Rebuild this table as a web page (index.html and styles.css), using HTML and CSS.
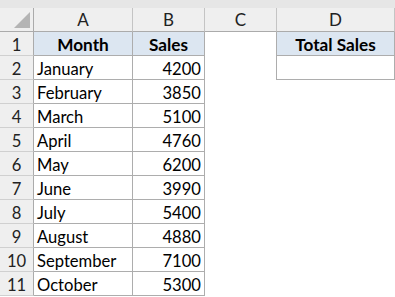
FILE: index.html
```html
<!DOCTYPE html>
<html>
<head>
<meta charset="utf-8">
<link rel="stylesheet" href="styles.css">
</head>
<body>
<div class="topband"></div>
<div class="sheet">
  <div class="corner"><span class="tri"></span></div>
  <div class="ch">A</div>
  <div class="ch">B</div>
  <div class="ch">C</div>
  <div class="ch">D</div>

  <div class="rh">1</div>
  <div class="cell th">Month</div>
  <div class="cell th">Sales</div>
  <div class="cell blank edge"></div>
  <div class="cell th dcell">Total Sales</div>

  <div class="rh">2</div>
  <div class="cell">January</div>
  <div class="cell num">4200</div>
  <div class="cell blank edge"></div>
  <div class="cell dcell"></div>

  <div class="rh">3</div>
  <div class="cell">February</div>
  <div class="cell num">3850</div>
  <div class="cell blank"></div>
  <div class="cell blank"></div>

  <div class="rh">4</div>
  <div class="cell">March</div>
  <div class="cell num">5100</div>
  <div class="cell blank"></div>
  <div class="cell blank"></div>

  <div class="rh">5</div>
  <div class="cell">April</div>
  <div class="cell num">4760</div>
  <div class="cell blank"></div>
  <div class="cell blank"></div>

  <div class="rh">6</div>
  <div class="cell">May</div>
  <div class="cell num">6200</div>
  <div class="cell blank"></div>
  <div class="cell blank"></div>

  <div class="rh">7</div>
  <div class="cell">June</div>
  <div class="cell num">3990</div>
  <div class="cell blank"></div>
  <div class="cell blank"></div>

  <div class="rh">8</div>
  <div class="cell">July</div>
  <div class="cell num">5400</div>
  <div class="cell blank"></div>
  <div class="cell blank"></div>

  <div class="rh">9</div>
  <div class="cell">August</div>
  <div class="cell num">4880</div>
  <div class="cell blank"></div>
  <div class="cell blank"></div>

  <div class="rh">10</div>
  <div class="cell">September</div>
  <div class="cell num">7100</div>
  <div class="cell blank"></div>
  <div class="cell blank"></div>

  <div class="rh">11</div>
  <div class="cell">October</div>
  <div class="cell num">5300</div>
  <div class="cell blank"></div>
  <div class="cell blank"></div>
</div>
</body>
</html>
```

FILE: styles.css
```css
html, body {
  margin: 0;
  padding: 0;
  background: #ffffff;
  width: 395px;
  height: 297px;
  overflow: hidden;
  font-family: Lato, "Open Sans", sans-serif;
  font-size: 16.6px;
  color: #000;
}
.topband {
  height: 8px;
  background: #e6e6e6;
}
.sheet {
  display: grid;
  grid-template-columns: 34px 99px 72px 72px 118px;
  grid-auto-rows: 24px;
  background: #ffffff;
}
.corner {
  background: #efefef;
  border-right: 1px solid #ababab;
  border-bottom: 1px solid #ababab;
  position: relative;
}
.tri {
  position: absolute;
  left: 14px;
  top: 4px;
  width: 0;
  height: 0;
  border-left: 16px solid transparent;
  border-bottom: 16px solid #b4b4b4;
}
.ch {
  background: #efefef;
  border-right: 1px solid #c4c4c4;
  border-bottom: 1px solid #ababab;
  display: flex;
  align-items: center;
  justify-content: center;
  color: #222;
  font-size: 17px;
}
.rh {
  background: #efefef;
  border-right: 1px solid #ababab;
  border-bottom: 1px solid #d0d0d0;
  display: flex;
  align-items: center;
  justify-content: center;
  color: #222;
  padding-top: 2px;
}
.cell {
  border-right: 1px solid #adadad;
  border-bottom: 1px solid #adadad;
  display: flex;
  align-items: center;
  padding-left: 3px;
  padding-top: 2px;
  white-space: nowrap;
}
.th {
  background: #dce6f1;
  font-weight: bold;
  font-size: 17.2px;
  justify-content: center;
  padding-left: 0;
}
.num {
  justify-content: flex-end;
  padding-left: 0;
  padding-right: 3px;
}
.blank {
  border: none;
}
.edge {
  border-right: 1px solid #adadad;
}
.dcell {
  border-right: 1px solid #adadad;
}
```
